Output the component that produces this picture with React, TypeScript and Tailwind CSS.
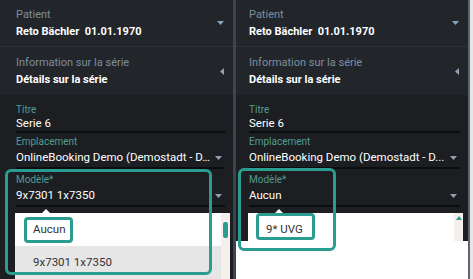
import React from 'react';

const font = { fontFamily: 'Roboto, "Noto Sans", sans-serif' };

function CaretDown({ className = '' }: { className?: string }) {
    return (
        <svg width="7" height="4" viewBox="0 0 7 4" className={`shrink-0 ${className}`}>
            <path d="M0 0 H7 L3.5 4 Z" fill="#8da2b6" />
        </svg>
    );
}

function CaretLeft({ className = '' }: { className?: string }) {
    return (
        <svg width="4" height="7" viewBox="0 0 4 7" className={`shrink-0 ${className}`}>
            <path d="M4 0 V7 L0 3.5 Z" fill="#8da2b6" />
        </svg>
    );
}

// one labelled input with the dark underline
function Field({
    label,
    value,
    caret = false,
    top,
    valueH,
}: {
    label: string;
    value: string;
    caret?: boolean;
    top: string;
    valueH: string;
}) {
    return (
        <div className={`pr-[8px] ${top}`}>
            <div className="h-[13px] text-[10px] leading-[13px] text-[#4f9d95]">{label}</div>
            <div className={`flex items-center justify-between border-b-2 border-[#0c0d0e] ${valueH}`}>
                <span className="truncate text-[11.5px] leading-[15px] text-white">{value}</span>
                {caret && <CaretDown className="ml-[4px] mr-[3px]" />}
            </div>
        </div>
    );
}

function Panel({
    model,
    pl,
    children,
}: {
    model: string;
    pl: string;
    children?: React.ReactNode;
}) {
    return (
        <div className="relative h-full w-full">
            {/* header: patient */}
            <div className={`flex h-[47px] items-center justify-between border-b border-[#2d3238] bg-[#22262b] pr-[9px] ${pl}`}>
                <div>
                    <div className="text-[11px] leading-[15px] text-[#7f8e9d]">Patient</div>
                    <div className="mt-[2px] text-[11px] leading-[15px] font-bold text-white">
                        Reto Bächler&nbsp;&nbsp;01.01.1970
                    </div>
                </div>
                <CaretDown />
            </div>
            {/* header: series info */}
            <div className={`flex h-[48px] items-center justify-between bg-[#22262b] pr-[9px] ${pl}`}>
                <div>
                    <div className="text-[11px] leading-[15px] text-[#7f8e9d]">Information sur la série</div>
                    <div className="mt-[2px] text-[11px] leading-[15px] font-bold text-white">
                        Détails sur la série
                    </div>
                </div>
                <CaretLeft />
            </div>
            {/* form */}
            <div className={`bg-[#1c1e21] pt-[8px] pb-[6px] ${pl}`}>
                <Field label="Titre" value="Serie 6" top="pt-0" valueH="h-[17px]" />
                <Field
                    label="Emplacement"
                    value="OnlineBooking Demo (Demostadt - D..."
                    caret
                    top="pt-[2px]"
                    valueH="h-[21px]"
                />
                <Field label="Modèle*" value={model} caret top="pt-[4px]" valueH="h-[21px]" />
            </div>
            {children}
        </div>
    );
}

export default function App() {
    return (
        <div className="flex h-[279px] w-[473px] overflow-hidden bg-white" style={font}>
            {/* left column */}
            <div className="relative h-full w-[233px] bg-[#1c1e21]">
                <Panel model="9x7301 1x7350" pl="pl-[16px]">
                    {/* open list */}
                    <div className="absolute left-[15px] top-[213px] h-[70px] w-[215px] bg-white">
                        <div className="absolute -top-[4px] left-[26px] h-0 w-0 border-x-[5px] border-b-[5px] border-x-transparent border-b-white" />
                        <div className="flex h-[33px] items-center pl-[18px] text-[11.5px] text-[#333]">Aucun</div>
                        <div className="flex h-[33px] w-[206px] items-center bg-[#e6e6e6] pl-[18px] text-[11.5px] text-[#333]">
                            9x7301 1x7350
                        </div>
                        <div className="absolute right-0 top-0 h-full w-[9px] bg-[#f3efec]">
                            <div className="ml-[2px] mt-[9px] h-[16px] w-[5px] rounded-[2px] bg-[#2a9d90]" />
                        </div>
                    </div>
                    {/* annotations */}
                    <div className="absolute left-[24px] top-[217px] h-[26px] w-[49px] rounded-[4px] border-[3px] border-[#2a9d90]" />
                    <div className="absolute left-[5px] top-[169px] h-[106px] w-[207px] rounded-[6px] border-[3px] border-[#2a9d90]" />
                </Panel>
            </div>
            {/* scrollbar between */}
            <div className="h-full w-[3px] bg-[#3a4550]" />
            {/* right column */}
            <div className="relative h-[241px] w-[232px] bg-[#1c1e21]">
                <Panel model="Aucun" pl="pl-[13px]">
                    <div className="absolute left-[12px] top-[213px] h-[28px] w-[215px] bg-white">
                        <div className="absolute -top-[4px] left-[26px] h-0 w-0 border-x-[5px] border-b-[5px] border-x-transparent border-b-white" />
                        <div className="flex h-[33px] items-center pl-[18px] text-[11.5px] text-[#333]">9* UVG</div>
                        <div className="absolute right-0 top-0 h-full w-[9px] bg-[#f3efec]">
                            <div className="ml-[2px] mt-[3px] h-0 w-0 border-x-[3px] border-b-[4px] border-x-transparent border-b-[#2a9d90]" />
                        </div>
                    </div>
                    <div className="absolute left-[20px] top-[213px] h-[27px] w-[59px] rounded-[4px] border-[3px] border-[#2a9d90]" />
                    <div className="absolute left-[2px] top-[168px] h-[83px] w-[98px] rounded-[6px] border-[3px] border-[#2a9d90]" />
                </Panel>
            </div>
            <div className="h-full w-[2px] bg-[#5b6670]" />
            <div className="h-full w-[3px] bg-[#e6e6e6]" />
        </div>
    );
}
